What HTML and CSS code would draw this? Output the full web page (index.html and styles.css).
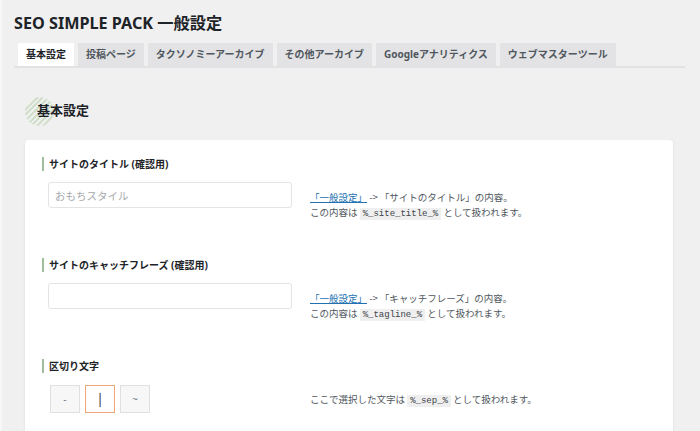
FILE: index.html
```html
<!DOCTYPE html>
<html lang="ja">
<head>
<meta charset="utf-8">
<title>SEO SIMPLE PACK 一般設定</title>
<link rel="stylesheet" href="styles.css">
</head>
<body>
<div class="wrap">
  <h1 class="page-title">SEO SIMPLE PACK 一般設定</h1>
  <nav class="tabs">
    <a class="tab is-active">基本設定</a>
    <a class="tab">投稿ページ</a>
    <a class="tab">タクソノミーアーカイブ</a>
    <a class="tab">その他アーカイブ</a>
    <a class="tab">Googleアナリティクス</a>
    <a class="tab">ウェブマスターツール</a>
  </nav>
  <section class="section">
    <h2 class="sec-title"><span class="sec-deco"></span><span class="sec-text">基本設定</span></h2>
    <div class="card">
      <div class="field">
        <h3 class="label">サイトのタイトル (確認用)</h3>
        <div class="row">
          <input class="text-input" type="text" placeholder="おもちスタイル">
          <p class="desc"><a class="link">「一般設定」</a> -&gt; 「サイトのタイトル」の内容。<br>この内容は <code class="code">%_site_title_%</code> として扱われます。</p>
        </div>
      </div>
      <div class="field">
        <h3 class="label">サイトのキャッチフレーズ (確認用)</h3>
        <div class="row">
          <input class="text-input" type="text">
          <p class="desc"><a class="link">「一般設定」</a> -&gt; 「キャッチフレーズ」の内容。<br>この内容は <code class="code">%_tagline_%</code> として扱われます。</p>
        </div>
      </div>
      <div class="field">
        <h3 class="label">区切り文字</h3>
        <div class="row row-sep">
          <div class="seps">
            <span class="sep">-</span>
            <span class="sep is-selected">|</span>
            <span class="sep">~</span>
          </div>
          <p class="desc desc-single">ここで選択した文字は <code class="code">%_sep_%</code> として扱われます。</p>
        </div>
      </div>
    </div>
  </section>
</div>
</body>
</html>
```

FILE: styles.css
```css
* { box-sizing: border-box; }
html, body { margin: 0; padding: 0; }
body {
  background: #f0f0f1;
  border-left: 2px solid #f7f7f8;
  font-family: "Noto Sans", "Noto Sans CJK JP", sans-serif;
  color: #1d2327;
  overflow: hidden;
  height: 431px;
}
.wrap {
  padding: 12px 15px 0 12px;
}
.page-title {
  margin: 0;
  font-size: 16.2px;
  line-height: 22px;
  font-weight: 700;
  color: #1d2327;
}
.tabs {
  margin-top: 9px;
  display: flex;
  gap: 4px;
  padding-left: 4px;
  border-bottom: 2px solid #e2e2e4;
}
.tab {
  display: block;
  height: 23px;
  line-height: 23px;
  padding: 0 8px;
  font-size: 10px;
  font-weight: 700;
  color: #50575e;
  background: #e3e3e5;
  font-family: "Noto Sans", "Noto Sans CJK JP", sans-serif;
}
.tab.is-active {
  background: #fff;
  color: #1d2327;
}
.section {
  margin: 0 12px 0 11px;
}
.sec-title {
  position: relative;
  margin: 32px 0 0;
  padding-left: 12px;
  font-size: 13px;
  line-height: 20px;
  font-weight: 700;
  color: #1d2327;
}
.sec-deco {
  position: absolute;
  left: 0;
  top: -3px;
  width: 29px;
  height: 29px;
  border-radius: 50%;
  background: repeating-linear-gradient(135deg, #d3dfcd 0 2px, #eef1ed 2px 4px);
}
.sec-text { position: relative; }
.card {
  margin-top: 20px;
  background: #fff;
  border-radius: 4px;
  box-shadow: 0 1px 3px rgba(0, 0, 0, 0.08);
  padding: 17px 17px 40px;
}
.field + .field { margin-top: 38px; }
.label {
  margin: 0;
  border-left: 2px solid #9fbf9c;
  padding-left: 5px;
  font-size: 10px;
  line-height: 14px;
  font-weight: 700;
  color: #1d2327;
}
.row {
  margin-top: 11px;
  padding-left: 6px;
  display: grid;
  grid-template-columns: 244px 1fr;
  column-gap: 18px;
  align-items: start;
}
.text-input {
  width: 244px;
  height: 26px;
  border: 1px solid #e4e4e6;
  border-radius: 3px;
  padding: 0 6px;
  font-family: "Noto Sans CJK JP", sans-serif;
  font-size: 10.5px;
  background: #fff;
  outline: none;
}
.text-input::placeholder { color: #a7aaad; }
.desc {
  margin: 8px 0 0;
  font-family: "Noto Sans CJK JP", sans-serif;
  font-size: 9.5px;
  line-height: 15px;
  color: #50575e;
}
.link {
  color: #2271b1;
  text-decoration: underline;
}
.code {
  font-family: "Liberation Mono", "DejaVu Sans Mono", monospace;
  font-size: 9px;
  line-height: 12px;
  background: #efefef;
  padding: 1px 3px;
  color: #3c434a;
}
.row-sep {
  margin-top: 12px;
  align-items: center;
}
.seps {
  display: flex;
  gap: 5px;
  padding-left: 2px;
}
.sep {
  width: 30px;
  height: 28px;
  display: flex;
  align-items: center;
  justify-content: center;
  border: 1px solid #e0e0e2;
  background: #f7f7f7;
  font-family: "Liberation Sans", sans-serif;
  font-size: 10px;
  color: #787c82;
}
.sep.is-selected {
  border-color: #f3a675;
  background: #fff;
  font-size: 14px;
  color: #50575e;
}
.desc-single { margin: 0; }
```
